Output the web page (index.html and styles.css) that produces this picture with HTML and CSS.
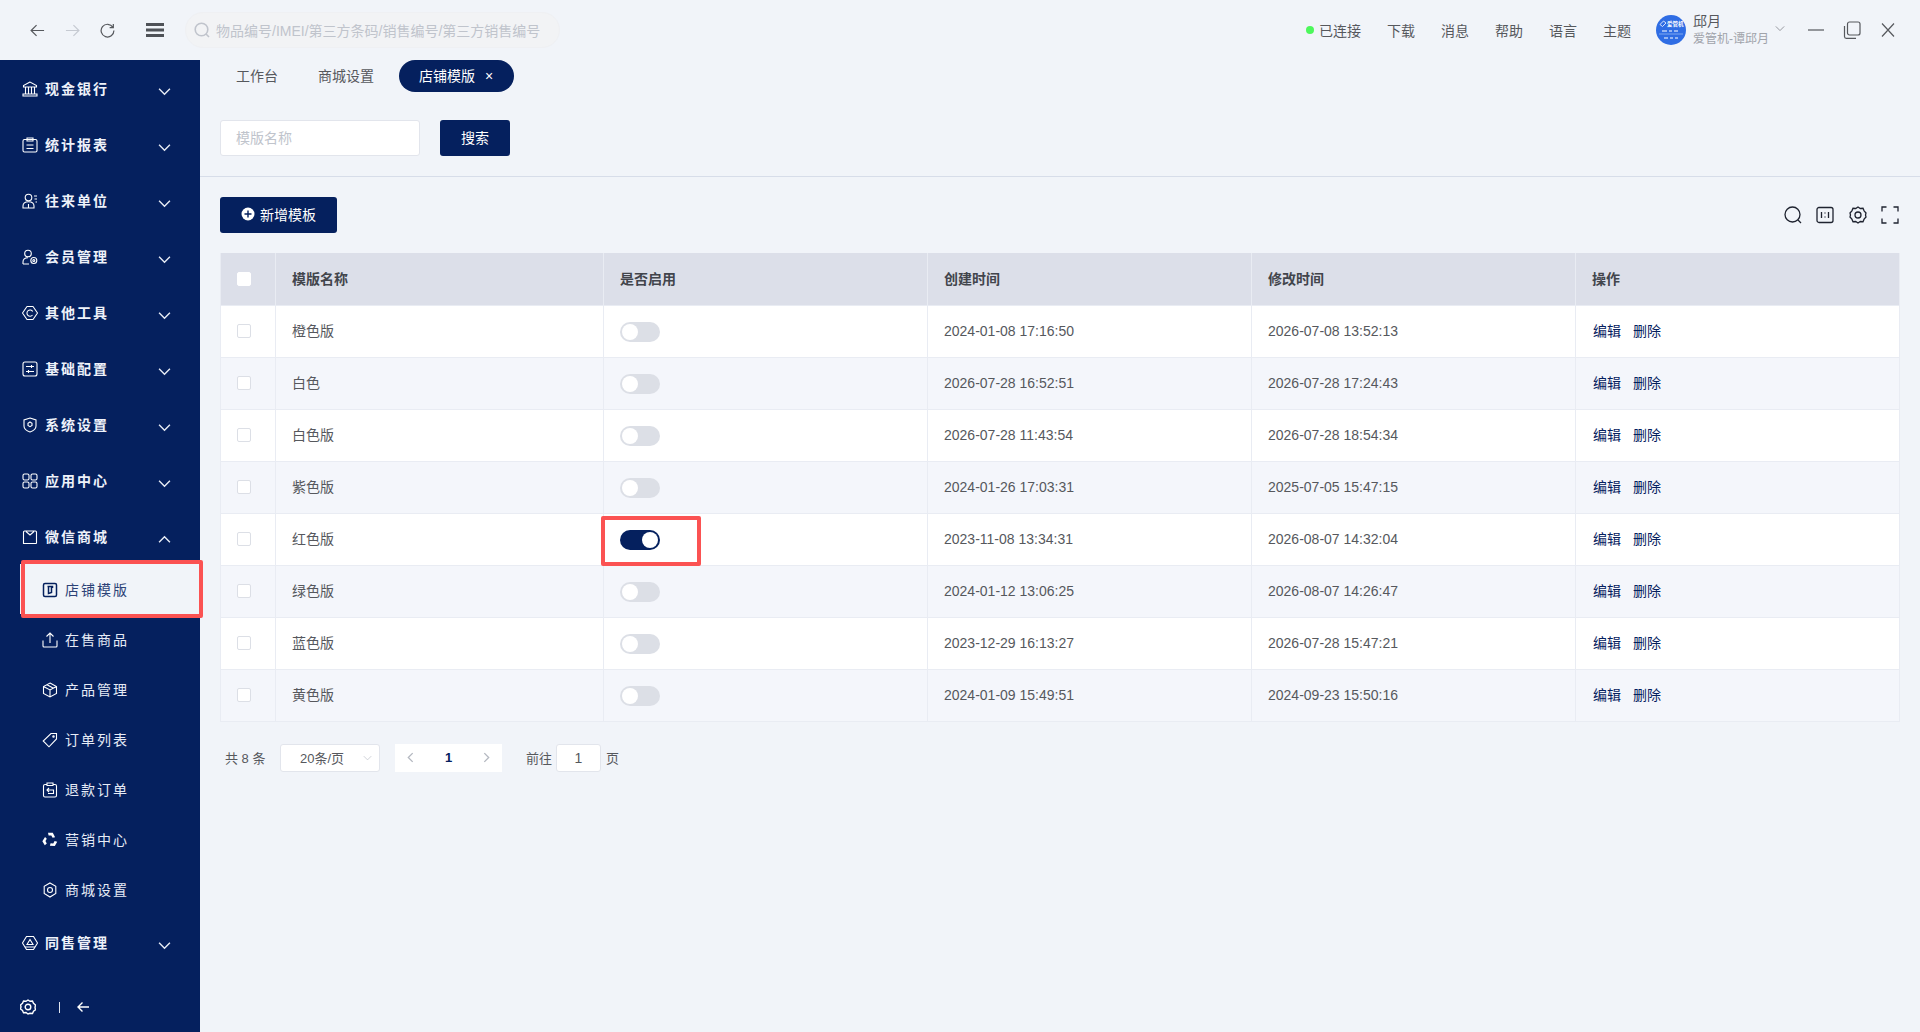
FILE: index.html
```html
<!DOCTYPE html>
<html lang="zh">
<head>
<meta charset="utf-8">
<title>店铺模版</title>
<link rel="stylesheet" href="styles.css">
</head>
<body>
<div class="app">
  <header class="topbar">
    <div class="nav-icons">
      <svg class="ic nav" viewBox="0 0 16 16"><path d="M15 8H1.500M7 2.200 1.200 8 7 13.800"/></svg>
      <svg class="ic nav dim" viewBox="0 0 16 16"><path d="M1 8h13.500M9 2.200 14.800 8 9 13.800"/></svg>
      <svg class="ic nav" viewBox="0 0 16 16"><path d="M13.800 4.600A6.800 6.800 0 1 0 14.800 8M14.200 1v3.900h-3.900"/></svg>
      <svg class="burger" viewBox="0 0 18 14"><path d="M0 0h18v3H0zM0 5.500h18v3H0zM0 11h18v3H0z"/></svg>
    </div>
    <div class="global-search">
      <svg class="ic gs-ic" viewBox="0 0 16 16"><circle cx="7.500" cy="7.500" r="6.300"/><path d="m12 12 3 3"/></svg>
      <span>物品编号/IMEI/第三方条码/销售编号/第三方销售编号</span>
    </div>
    <div class="top-right">
      <span class="status"><i class="dot"></i>已连接</span>
      <a class="top-link">下载</a>
      <a class="top-link">消息</a>
      <a class="top-link">帮助</a>
      <a class="top-link">语言</a>
      <a class="top-link">主题</a>
      <div class="user">
        <svg class="avatar" viewBox="0 0 30 30">
          <circle cx="15" cy="15" r="15" fill="#2f6de4"/>
          <path d="M4 9.500 7.500 6l2.500 2-3.500 3.500z" fill="none" stroke="#fff" stroke-width=".8"/>
          <text x="11" y="11" class="av-t">爱管机</text>
          <path d="M3 19h24" stroke="#cfe0ff" stroke-width=".5"/>
          <path d="M6 16h5M13 16h3M18 16h4M8 23h4M14 23h3M19 23h3" stroke="#fff" stroke-width="1.200"/>
        </svg>
        <div class="user-text">
          <div class="user-name">邱月</div>
          <div class="user-org">爱管机-谭邱月</div>
        </div>
        <svg class="ic user-chev" viewBox="0 0 12 8"><path d="m1 1.500 5 5 5-5"/></svg>
      </div>
      <div class="win">
        <svg class="ic win-ic" viewBox="0 0 18 18"><path d="M1 9h16"/></svg>
        <svg class="ic win-ic" viewBox="0 0 18 18"><rect x="4.500" y="1" width="12.500" height="13" rx="2"/><path d="M1.500 5v10.500A1.800 1.800 0 0 0 3.300 17.300H13"/></svg>
        <svg class="ic win-ic" viewBox="0 0 18 18"><path d="m3 2.500 12 13M15 2.500 3 15.500"/></svg>
      </div>
    </div>
  </header>

  <div class="body">
    <aside class="sidebar">
      <nav class="menu">
        <a class="m-item"><svg class="m-ic" viewBox="0 0 16 16"><path d="M8 1 1.500 4.500v1.500h13V4.500zM3.500 6.500v6M6.500 6.500v6M9.500 6.500v6M12.500 6.500v6M1 13h14v2H1z"/></svg><span>现金银行</span><svg class="chev" viewBox="0 0 12 8"><path d="m1 1.500 5 5 5-5"/></svg></a>
        <a class="m-item"><svg class="m-ic" viewBox="0 0 16 16"><rect x="1" y="2.500" width="14" height="12.500" rx="1.500"/><path d="M5 1h6v3H5zM4.500 8h7M4.500 11.500h7"/></svg><span>统计报表</span><svg class="chev" viewBox="0 0 12 8"><path d="m1 1.500 5 5 5-5"/></svg></a>
        <a class="m-item"><svg class="m-ic" viewBox="0 0 16 16"><circle cx="6.500" cy="4.500" r="3.300"/><path d="M1 15v-2c0-2.500 2-4.300 5.500-4.300S12 10.500 12 13v2zM6.500 15v-4M12 3h3M12.500 6H15M13.500 9H15"/></svg><span>往来单位</span><svg class="chev" viewBox="0 0 12 8"><path d="m1 1.500 5 5 5-5"/></svg></a>
        <a class="m-item"><svg class="m-ic" viewBox="0 0 16 16"><circle cx="6" cy="4.500" r="3.300"/><path d="M1 15v-2c0-2.500 2-4.300 5-4.300M1 15h6"/><circle cx="11.800" cy="11.500" r="3"/><circle cx="11.800" cy="11.500" r="1"/></svg><span>会员管理</span><svg class="chev" viewBox="0 0 12 8"><path d="m1 1.500 5 5 5-5"/></svg></a>
        <a class="m-item"><svg class="m-ic hex" viewBox="0 0 16 16"><path d="M5 1.500h6l4.500 6.500-4.500 6.500H5L.5 8z"/><path d="M10.700 6.500A3.100 3.100 0 1 0 10.500 10"/></svg><span>其他工具</span><svg class="chev" viewBox="0 0 12 8"><path d="m1 1.500 5 5 5-5"/></svg></a>
        <a class="m-item"><svg class="m-ic" viewBox="0 0 16 16"><rect x="1" y="1" width="14" height="14" rx="2"/><path d="M4 5.500h8M4 10.500h8M9.500 4v3M6.500 9v3"/></svg><span>基础配置</span><svg class="chev" viewBox="0 0 12 8"><path d="m1 1.500 5 5 5-5"/></svg></a>
        <a class="m-item"><svg class="m-ic" viewBox="0 0 16 16"><path d="M8 1 14 3v6c0 3-3 5-6 6-3-1-6-3-6-6V3z"/><path d="M8 5l2 1.200v2.300L8 9.700 6 8.500V6.200z"/></svg><span>系统设置</span><svg class="chev" viewBox="0 0 12 8"><path d="m1 1.500 5 5 5-5"/></svg></a>
        <a class="m-item"><svg class="m-ic" viewBox="0 0 16 16"><rect x="1" y="1" width="6" height="6" rx="1.500"/><rect x="9" y="1" width="6" height="6" rx="1.500"/><rect x="1" y="9" width="6" height="6" rx="1.500"/><rect x="9" y="9" width="6" height="6" rx="1.500"/></svg><span>应用中心</span><svg class="chev" viewBox="0 0 12 8"><path d="m1 1.500 5 5 5-5"/></svg></a>
        <a class="m-item"><svg class="m-ic" viewBox="0 0 16 16"><path d="M1.500 3a1 1 0 0 1 1-1h11a1 1 0 0 1 1 1v11a.5.5 0 0 1-.5.5H1.500zM4 2.500 8 6l4-3.500"/></svg><span>微信商城</span><svg class="chev" viewBox="0 0 12 8"><path d="m1 6.500 5-5 5 5"/></svg></a>
        <div class="submenu">
          <a class="s-item active"><svg class="s-ic" viewBox="0 0 16 16"><rect x="1.500" y="1.500" width="13" height="13" rx="1.500"/><path d="M5.500 4.500h5v1.500M6.500 4.500v7l3-1V5"/></svg><span>店铺模版</span><i class="mark mark-menu"></i></a>
          <a class="s-item"><svg class="s-ic" viewBox="0 0 16 16"><path d="M1 8.500V14a1 1 0 0 0 1 1h12a1 1 0 0 0 1-1V8.500M8 11V1M4.500 4.500 8 1l3.500 3.500"/></svg><span>在售商品</span></a>
          <a class="s-item"><svg class="s-ic" viewBox="0 0 16 16"><path d="M8 1l6.500 3.500v7L8 15l-6.500-3.500v-7zM1.500 4.500 8 8l6.500-3.500M8 8v7M5 2.700l6.500 3.600"/></svg><span>产品管理</span></a>
          <a class="s-item"><svg class="s-ic" viewBox="0 0 16 16"><path d="M9 1.500h5.500V7L7 14.800 1.200 9z"/><circle cx="11.500" cy="4.500" r=".7"/></svg><span>订单列表</span></a>
          <a class="s-item"><svg class="s-ic" viewBox="0 0 16 16"><path d="M5 2.500H3a1.500 1.500 0 0 0-1.500 1.500v9.500A1.500 1.500 0 0 0 3 15h10a1.500 1.500 0 0 0 1.500-1.500V4A1.500 1.500 0 0 0 13 2.500h-2M5 3.500V1h6v2.500zM5 8h6.500v3.500H6M7 6 5 8l2 2"/></svg><span>退款订单</span></a>
          <a class="s-item"><svg class="s-ic" viewBox="0 0 16 16"><path class="s-fill" d="M6 .8h4.800l2.300 4.400-2.500.6-1.300-2.300H6.600z"/><path class="s-fill" transform="rotate(120 8 8)" d="M6 .8h4.800l2.300 4.400-2.500.6-1.300-2.300H6.600z"/><path class="s-fill" transform="rotate(240 8 8)" d="M6 .8h4.800l2.300 4.400-2.500.6-1.300-2.300H6.600z"/></svg><span>营销中心</span></a>
          <a class="s-item"><svg class="s-ic" viewBox="0 0 16 16"><path d="M8 1l5.800 3.400v7L8 15l-5.800-3.600v-7z"/><circle cx="8" cy="8" r="2.500"/></svg><span>商城设置</span></a>
        </div>
        <a class="m-item"><svg class="m-ic" viewBox="0 0 16 16"><path d="M4.500 1.500h7L15.500 8l-4 6.500h-7L.5 8z"/><path d="M8 4.500 11 9.500H5zM3 12h10"/></svg><span>同售管理</span><svg class="chev" viewBox="0 0 12 8"><path d="m1 1.500 5 5 5-5"/></svg></a>
      </nav>
      <div class="side-foot">
        <svg class="m-ic foot-gear" viewBox="0 0 16 16"><path d="M8 1l2 1.300 2.500-.2 1 2.200 2 1.700-.5 2.500.5 2.300-2 1.500-1 2.200-2.500-.2L8 15l-2-1.500-2.500.2-1-2.200-2-1.500.5-2.300L.5 6l2-1.700 1-2.200L6 2.300z"/><circle cx="8" cy="8" r="2.800"/></svg>
        <i class="foot-sep"></i>
        <svg class="m-ic foot-arrow" viewBox="0 0 12 12"><path d="M12 6H1M5.500 1.500 1 6l4.500 4.500"/></svg>
      </div>
    </aside>

    <main class="main">
      <div class="tabs">
        <a class="tab tab-first">工作台</a>
        <a class="tab">商城设置</a>
        <a class="tab tab-on">店铺模版<span class="tab-x">×</span></a>
      </div>
      <div class="filter">
        <div class="input">模版名称</div>
        <button class="btn btn-search">搜索</button>
      </div>
      <div class="toolbar">
        <button class="btn btn-add"><svg class="plus" viewBox="0 0 14 14"><circle cx="7" cy="7" r="6.500" fill="#fff"/><path d="M7 3.500v7M3.500 7h7" stroke="#05205e" stroke-width="1.400"/></svg>新增模板</button>
        <div class="tools">
          <svg class="ic tool" viewBox="0 0 18 18"><circle cx="8.500" cy="8.500" r="7.500"/><path d="m14 14 3 3"/></svg>
          <svg class="ic tool" viewBox="0 0 18 18"><rect x="1" y="1.500" width="16" height="15" rx="2"/><path d="M5.500 6v6M9 6.500v1M9 10.500v1M12.500 6v6"/></svg>
          <svg class="ic tool" viewBox="0 0 18 18"><path d="M9 1l2.300 1.500 2.700-.2 1.100 2.500L17 7l-.5 2 .5 2-1.900 2.200-1.100 2.500-2.700-.2L9 17l-2.300-1.500-2.700.2-1.100-2.500L1 11l.5-2L1 7l1.900-2.200L4 2.300l2.700.2z"/><circle cx="9" cy="9" r="3"/></svg>
          <svg class="ic tool" viewBox="0 0 18 18"><path d="M1 5.500V1h4.500M12.500 1H17v4.500M17 12.500V17h-4.500M5.500 17H1v-4.500"/></svg>
        </div>
      </div>
      <table class="grid">
        <colgroup>
          <col class="c-check"><col class="c-name"><col class="c-std"><col class="c-std"><col class="c-std"><col class="c-op">
        </colgroup>
        <thead>
          <tr><th><i class="check head"></i></th><th>模版名称</th><th>是否启用</th><th>创建时间</th><th>修改时间</th><th>操作</th></tr>
        </thead>
        <tbody>
          <tr><td class="box"><i class="check"></i></td><td class="cn">橙色版</td><td class="box"><i class="switch"></i></td><td>2024-01-08 17:16:50</td><td>2026-07-08 13:52:13</td><td class="cn ops"><a class="op">编辑</a><a class="op">删除</a></td></tr>
          <tr><td class="box"><i class="check"></i></td><td class="cn">白色</td><td class="box"><i class="switch"></i></td><td>2026-07-28 16:52:51</td><td>2026-07-28 17:24:43</td><td class="cn ops"><a class="op">编辑</a><a class="op">删除</a></td></tr>
          <tr><td class="box"><i class="check"></i></td><td class="cn">白色版</td><td class="box"><i class="switch"></i></td><td>2026-07-28 11:43:54</td><td>2026-07-28 18:54:34</td><td class="cn ops"><a class="op">编辑</a><a class="op">删除</a></td></tr>
          <tr><td class="box"><i class="check"></i></td><td class="cn">紫色版</td><td class="box"><i class="switch"></i></td><td>2024-01-26 17:03:31</td><td>2025-07-05 15:47:15</td><td class="cn ops"><a class="op">编辑</a><a class="op">删除</a></td></tr>
          <tr><td class="box"><i class="check"></i></td><td class="cn">红色版</td><td class="box"><i class="switch on"><i class="mark mark-switch"></i></i></td><td>2023-11-08 13:34:31</td><td>2026-08-07 14:32:04</td><td class="cn ops"><a class="op">编辑</a><a class="op">删除</a></td></tr>
          <tr><td class="box"><i class="check"></i></td><td class="cn">绿色版</td><td class="box"><i class="switch"></i></td><td>2024-01-12 13:06:25</td><td>2026-08-07 14:26:47</td><td class="cn ops"><a class="op">编辑</a><a class="op">删除</a></td></tr>
          <tr><td class="box"><i class="check"></i></td><td class="cn">蓝色版</td><td class="box"><i class="switch"></i></td><td>2023-12-29 16:13:27</td><td>2026-07-28 15:47:21</td><td class="cn ops"><a class="op">编辑</a><a class="op">删除</a></td></tr>
          <tr><td class="box"><i class="check"></i></td><td class="cn">黄色版</td><td class="box"><i class="switch"></i></td><td>2024-01-09 15:49:51</td><td>2024-09-23 15:50:16</td><td class="cn ops"><a class="op">编辑</a><a class="op">删除</a></td></tr>
        </tbody>
      </table>
      <div class="pagination">
        <span class="total">共 8 条</span>
        <div class="size">20条/页<svg class="ic size-chev" viewBox="0 0 12 8"><path d="m1 1.500 5 5 5-5"/></svg></div>
        <div class="pager">
          <svg class="ic pg-chev" viewBox="0 0 8 12"><path d="M6.500 1 1.500 6l5 5"/></svg>
          <b class="pg-num">1</b>
          <svg class="ic pg-chev" viewBox="0 0 8 12"><path d="m1.500 1 5 5-5 5"/></svg>
        </div>
        <span class="goto">前往</span>
        <div class="pg-input">1</div>
        <span class="goto-end">页</span>
      </div>
    </main>
  </div>
</div>
</body>
</html>
```
FILE: styles.css
```css
* { box-sizing: border-box; }
html, body { margin: 0; height: 100%; }
body {
  font-family: "Liberation Sans", "Noto Sans CJK SC", sans-serif;
  font-size: 14px;
  color: #56585d;
  background: #f1f4f9;
  overflow: hidden;
}
i { font-style: normal; display: block; }
a { display: block; }
button { font: inherit; border: 0; cursor: pointer; }

.app { height: 1032px; display: flex; flex-direction: column; }
.ic { fill: none; stroke: currentColor; stroke-width: 1.300; display: block; flex: none; }

/* top bar */
.topbar { height: 60px; flex: none; display: flex; align-items: center; padding-left: 30px; }
.nav-icons { display: flex; align-items: center; gap: 20px; width: 155px; color: #56585d; }
.nav { width: 15px; height: 15px; }
.nav.dim { color: #c6cad2; }
.burger { width: 18px; height: 14px; fill: #4f5258; margin-left: 11px; }
.global-search {
  width: 375px; height: 36px; border-radius: 18px; background: #f2f3f5; border: 1px solid #eff0f3;
  display: flex; align-items: center; padding: 0 0 1px 8px; gap: 6px; color: #c0c4cc;
}
.gs-ic { width: 16px; height: 16px; color: #c0c4cc; stroke-width: 1.600; }
.top-right { margin-left: auto; display: flex; align-items: center; height: 60px; padding-bottom: 1px; }
.status { display: flex; align-items: center; gap: 5px; width: 81px; }
.dot { width: 8px; height: 8px; border-radius: 50%; background: #4df85c; }
.top-link { width: 54px; }
.user { display: flex; align-items: center; margin-left: -1px; width: 153px; }
.avatar { width: 30px; height: 30px; flex: none; display: block; }
.av-t { font-size: 5.500px; font-weight: 700; fill: #fff; }
.user-text { margin-left: 7px; width: 81px; }
.user-name { font-size: 14px; line-height: 18px; }
.user-org { font-size: 12px; line-height: 18px; color: #a0a3aa; white-space: nowrap; }
.user-chev { width: 10px; height: 7px; color: #84878e; stroke-width: 1; margin: -2px 0 0 1px; }
.win { display: flex; align-items: center; gap: 18px; width: 113px; padding-right: 28px; margin-left: -2px; color: #56585d; }
.win-ic { width: 18px; height: 18px; stroke-width: 1.200; }

/* layout */
.body { flex: 1; display: flex; min-height: 0; }
.sidebar {
  width: 200px; flex: none; background: #05205e; color: #fff;
  display: flex; flex-direction: column;
}
.menu { flex: 1; }
.m-item {
  height: 56px; display: flex; align-items: center; padding-left: 22px;
  font-weight: 700; letter-spacing: 2px; color: #eef2fa;
}
.m-ic { width: 16px; height: 16px; fill: none; stroke: #fff; stroke-width: 1.100; flex: none; margin: 2px 7px 0 0; }
.m-ic.hex { stroke-linejoin: round; }
.chev { width: 13px; height: 9px; fill: none; stroke: #e8ecf5; stroke-width: 1.300; margin-left: 49px; margin-top: 6px; }
.submenu { display: flex; flex-direction: column; }
.s-item {
  height: 50px; display: flex; align-items: center; padding-left: 22px; margin-left: 20px;
  letter-spacing: 2px; color: #e6ebf6; position: relative;
}
.s-ic { width: 16px; height: 16px; fill: none; stroke: #fff; stroke-width: 1.100; flex: none; margin: 2px 7px 0 0; }
.s-ic .s-fill { fill: #fff; stroke: none; }
.s-item.active { background: #f1f4f9; color: #2c4277; }
.s-item.active .s-ic { stroke: #05205e; stroke-width: 1.500; }
.mark { position: absolute; border: 4px solid #fb5252; border-radius: 2px; }
.mark-menu { left: 1px; right: -3px; top: -4px; bottom: -4px; }
.side-foot { height: 50px; display: flex; align-items: center; padding-left: 20px; }
.foot-gear { margin: 0 23px 0 0; stroke-width: 1.400; }
.foot-sep { width: 1px; height: 11px; background: #dfe4ee; margin-right: 17px; }
.foot-arrow { width: 12px; height: 12px; stroke-width: 1.400; margin: 0; }

/* main */
.main { flex: 1; min-width: 0; padding: 0 20px; }
.tabs { display: flex; height: 32px; align-items: center; color: #56585d; }
.tab { line-height: 32px; padding: 0 16px; margin-right: 9px; }
.tab-first { margin-right: 8px; }
.tab-on {
  background: #05205e; color: #fff; border-radius: 16px; padding: 0 20px;
  width: 115px; display: flex; align-items: center; white-space: nowrap;
}
.tab-x { margin-left: 10px; font-size: 14px; }
.filter {
  margin: 28px -20px 0; padding: 0 20px 20px; border-bottom: 1px solid #d7dde9;
  display: flex; gap: 20px; height: 57px;
}
.input {
  width: 200px; height: 36px; background: #fff; border: 1px solid #e2e5ec; border-radius: 3px;
  padding-left: 15px; line-height: 34px; color: #c0c4cc;
}
.btn { background: #05205e; color: #fff; border-radius: 3px; height: 36px; padding-bottom: 3px; }
.btn-search { width: 70px; }
.toolbar { display: flex; justify-content: space-between; align-items: center; height: 36px; margin-top: 20px; }
.btn-add { width: 117px; display: flex; align-items: center; padding-left: 21px; gap: 5px; }
.plus { width: 14px; height: 14px; flex: none; display: block; }
.tools { display: flex; gap: 14.500px; color: #1f2330; padding-right: 1px; }
.tool { width: 18px; height: 18px; }

/* table */
.grid { width: 1679px; margin-top: 20px; border-collapse: collapse; table-layout: fixed; background: #fff; }
.c-check { width: 55px; }
.c-name { width: 328px; }
.c-std { width: 324px; }
.c-op { width: 324px; }
.grid th, .grid td { height: 52px; padding: 0 16px; text-align: left; border: 1px solid #e9ecf3; white-space: nowrap; }
.grid th { background: #dcdfe9; color: #42454c; font-weight: 700; border-top: 0; padding-bottom: 2px; }
.grid td.cn { padding-bottom: 2px; }
.grid td.ops { padding-left: 17px; }
.grid tbody tr:nth-child(even) td { background: #f4f6fb; }
.grid th:first-child { padding-bottom: 0; }
.check { width: 14px; height: 14px; background: #fff; border: 1px solid #dcdfe6; border-radius: 2px; }
.check.head { border-color: #fff; }
.switch { position: relative; width: 40px; height: 20px; border-radius: 10px; background: #dcdfe6; margin-top: 1px; }
.switch::after {
  content: ""; position: absolute; left: 2px; top: 2px; width: 16px; height: 16px;
  border-radius: 50%; background: #fff;
}
.switch.on { background: #05205e; }
.switch.on::after { left: 22px; }
.mark-switch { left: -19px; top: -14px; width: 100px; height: 50px; }
.op { display: inline-block; color: #05205e; margin-right: 12px; }

/* pagination */
.pagination { display: flex; align-items: center; height: 28px; margin-top: 22px; font-size: 13px; padding-left: 5px; }
.total { width: 55px; }
.size {
  width: 100px; height: 28px; background: #fff; border: 1px solid #e2e5ec; border-radius: 3px;
  display: flex; align-items: center; padding-left: 19px; white-space: nowrap;
}
.size-chev { width: 9px; height: 6px; margin-left: 19px; color: #c0c4cc; stroke-width: 1; }
.pager {
  width: 107px; height: 28px; background: #fff; margin-left: 15px;
  display: flex; align-items: center; justify-content: space-between; padding: 0 12px;
}
.pg-chev { width: 7px; height: 11px; color: #b4b8c0; stroke-width: 1.500; }
.pg-num { color: #05205e; font-size: 13px; }
.goto { margin-left: 24px; width: 30px; }
.pg-input {
  width: 45px; height: 28px; background: #fff; border: 1px solid #e2e5ec; border-radius: 3px;
  text-align: center; line-height: 26px; font-size: 14px;
}
.goto-end { margin-left: 5px; }
```
